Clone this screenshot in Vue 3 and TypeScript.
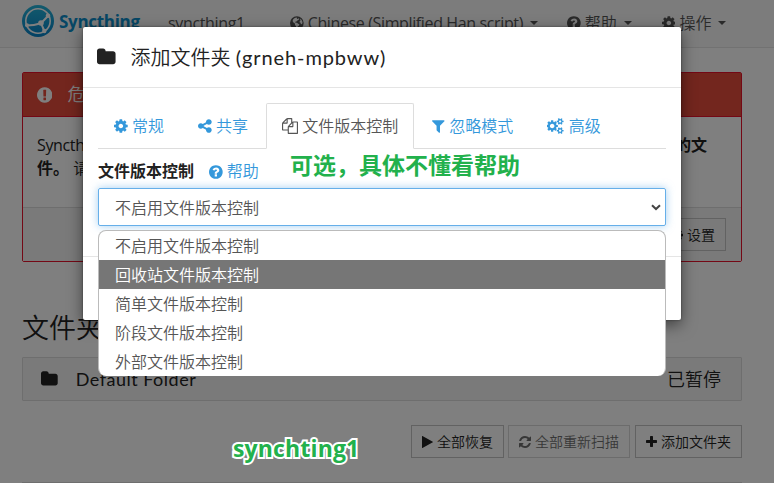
<script setup lang="ts">
import { defineComponent, h } from 'vue'

interface Glyph {
  box: string
  d: string
}

const glyphs: Record<string, Glyph> = {
  cog: {
    box: '128 0 1536 1792',
    d: 'M1152 896q0-106-75-181t-181-75-181 75-75 181 75 181 181 75 181-75 75-181zm512-109v222q0 12-8 23t-20 13l-185 28q-19 54-39 91 35 50 107 138 10 12 10 25t-9 23q-27 37-99 108t-94 71q-12 0-26-9l-138-108q-44 23-91 38-16 136-29 186-7 28-36 28h-222q-14 0-24.5-8.5t-11.5-21.5l-28-184q-49-16-90-37l-141 107q-10 9-25 9-14 0-25-11-126-114-165-168-7-10-7-23 0-12 8-23 15-21 51-66.5t54-70.5q-27-50-41-99l-183-27q-13-2-21-12.5t-8-23.5v-222q0-12 8-23t19-13l186-28q14-46 39-92-40-57-107-138-10-12-10-24 0-10 9-23 26-36 98.5-107.5t94.5-71.5q13 0 26 10l138 107q44-23 91-38 16-136 29-186 7-28 36-28h222q14 0 24.5 8.5t11.5 21.5l28 184q49 16 90 37l142-107q9-9 24-9 13 0 25 10 129 119 165 170 7 8 7 22 0 12-8 23-15 21-51 66.5t-54 70.5q26 50 41 98l183 28q13 2 21 12.5t8 23.5z',
  },
  share: {
    box: '128 0 1536 1792',
    d: 'M1344 1024q133 0 226.5 93.5t93.5 226.5-93.5 226.5-226.5 93.5-226.5-93.5-93.5-226.5q0-12 2-34l-360-180q-92 86-218 86-133 0-226.5-93.5t-93.5-226.5 93.5-226.5 226.5-93.5q126 0 218 86l360-180q-2-22-2-34 0-133 93.5-226.5t226.5-93.5 226.5 93.5 93.5 226.5-93.5 226.5-226.5 93.5q-126 0-218-86l-360 180q2 22 2 34t-2 34l360 180q92-86 218-86z',
  },
  files: {
    box: '0 0 1792 1792',
    d: 'M1696 384q40 0 68 28t28 68v1216q0 40-28 68t-68 28h-960q-40 0-68-28t-28-68v-288h-544q-40 0-68-28t-28-68v-672q0-40 20-88t48-76l408-408q28-28 76-48t88-20h416q40 0 68 28t28 68v328q68-40 128-40h416zm-544 213l-299 299h299v-299zm-640-384l-299 299h299v-299zm196 647l316-316v-416h-384v416q0 40-28 68t-68 28h-416v640h512v-256q0-40 20-88t48-76zm956 804v-1152h-384v416q0 40-28 68t-68 28h-416v640h896z',
  },
  filter: {
    box: '192 0 1408 1792',
    d: 'M1595 295q17 41-14 70l-493 493v742q0 42-39 59-13 5-25 5-27 0-45-19l-256-256q-19-19-19-45v-486l-493-493q-31-29-14-70 17-39 59-39h1280q42 0 59 39z',
  },
  cogs: {
    box: '0 0 1920 1792',
    d: 'M832 896q0-106-75-181t-181-75-181 75-75 181 75 181 181 75 181-75 75-181zm768 512q0-52-38-90t-90-38-90 38-38 90q0 53 37.5 90.5t90.5 37.5 90.5-37.5 37.5-90.5zm0-1024q0-52-38-90t-90-38-90 38-38 90q0 53 37.5 90.5t90.5 37.5 90.5-37.5 37.5-90.5zm-384 421v185q0 10-7 19.5t-16 10.5l-155 24q-11 35-32 76 34 48 90 115 7 11 7 20 0 12-7 19-23 30-82.5 89.5t-78.5 59.5q-11 0-21-7l-115-90q-37 19-77 31-11 108-23 155-7 24-30 24h-186q-11 0-20-7.5t-10-17.5l-23-153q-34-10-75-31l-118 89q-7 7-20 7-11 0-21-8-144-133-144-160 0-9 7-19 10-14 41-53t47-61q-23-44-35-82l-152-24q-10-1-17-9.5t-7-19.5v-185q0-10 7-19.5t16-10.5l155-24q11-35 32-76-34-48-90-115-7-11-7-20 0-12 7-20 22-30 82-89t79-59q11 0 21 7l115 90q34-18 77-32 11-108 23-154 7-24 30-24h186q11 0 20 7.5t10 17.5l23 153q34 10 75 31l118-89q8-7 20-7 11 0 21 8 144 133 144 160 0 9-7 19-12 16-42 54t-45 60q23 48 34 82l152 23q10 2 17 10.5t7 19.5zm640 533v140q0 16-149 31-12 27-30 52 51 113 51 138 0 4-4 7-122 71-124 71-8 0-46-47t-52-68q-20 2-30 2t-30-2q-14 21-52 68t-46 47q-2 0-124-71-4-3-4-7 0-25 51-138-18-25-30-52-149-15-149-31v-140q0-16 149-31 13-29 30-52-51-113-51-138 0-4 4-7 4-2 35-20t59-34 30-16q8 0 46 46.5t52 67.5q20-2 30-2t30 2q51-71 92-112l6-2q4 0 124 70 4 3 4 7 0 25-51 138 17 23 30 52 149 15 149 31zm0-1024v140q0 16-149 31-12 27-30 52 51 113 51 138 0 4-4 7-122 71-124 71-8 0-46-47t-52-68q-20 2-30 2t-30-2q-14 21-52 68t-46 47q-2 0-124-71-4-3-4-7 0-25 51-138-18-25-30-52-149-15-149-31v-140q0-16 149-31 13-29 30-52-51-113-51-138 0-4 4-7 4-2 35-20t59-34 30-16q8 0 46 46.5t52 67.5q20-2 30-2t30 2q51-71 92-112l6-2q4 0 124 70 4 3 4 7 0 25-51 138 17 23 30 52 149 15 149 31z',
  },
  question: {
    box: '128 0 1536 1792',
    d: 'M1024 1376v-192q0-14-9-23t-23-9h-192q-14 0-23 9t-9 23v192q0 14 9 23t23 9h192q14 0 23-9t9-23zm256-672q0-88-55.5-163t-138.5-116-170-41q-243 0-371 213-15 24 8 42l132 100q7 6 19 6 16 0 25-12 53-68 86-92 34-24 86-24 48 0 85.5 26t37.5 59q0 38-20 61t-68 45q-63 28-115.5 86.5t-52.5 125.5v36q0 14 9 23t23 9h192q14 0 23-9t9-23q0-19 21.5-49.5t54.5-49.5q32-18 49-28.5t46-35 44.5-48 28-60.5 12.5-81zm384 192q0 209-103 385.5t-279.5 279.5-385.5 103-385.5-103-279.5-279.5-103-385.5 103-385.5 279.5-279.5 385.5-103 385.5 103 279.5 279.5 103 385.5z',
  },
  exclamation: {
    box: '128 0 1536 1792',
    d: 'M896 128q209 0 385.5 103t279.5 279.5 103 385.5-103 385.5-279.5 279.5-385.5 103-385.5-103-279.5-279.5-103-385.5 103-385.5 279.5-279.5 385.5-103zm128 1247v-190q0-14-9-23.5t-22-9.5h-192q-13 0-23 10t-10 23v190q0 13 10 23t23 10h192q13 0 22-9.5t9-23.5zm-2-344l18-621q0-12-10-18-10-8-24-8h-220q-14 0-24 8-10 6-10 18l17 621q0 10 10 17.5t24 7.5h185q14 0 23.5-7.5t10.5-17.5z',
  },
  folder: {
    box: '64 0 1664 1792',
    d: 'M1728 608v704q0 92-66 158t-158 66h-1216q-92 0-158-66t-66-158v-960q0-92 66-158t158-66h320q92 0 158 66t66 158v32h672q92 0 158 66t66 158z',
  },
  plus: {
    box: '192 0 1408 1792',
    d: 'M1600 736v192q0 40-28 68t-68 28h-416v416q0 40-28 68t-68 28h-192q-40 0-68-28t-28-68v-416h-416q-40 0-68-28t-28-68v-192q0-40 28-68t68-28h416v-416q0-40 28-68t68-28h192q40 0 68 28t28 68v416h416q40 0 68 28t28 68z',
  },
  play: {
    box: '192 0 1408 1792',
    d: 'M1576 927l-1328 738q-23 13-39.5 3t-16.5-36v-1472q0-26 16.5-36t39.5 3l1328 738q23 13 23 31t-23 31z',
  },
  refresh: {
    box: '128 0 1536 1792',
    d: 'M1639 1056q0 5-1 7-64 268-268 434.5t-478 166.5q-146 0-282.5-55t-243.5-157l-129 129q-19 19-45 19t-45-19-19-45v-448q0-26 19-45t45-19h448q26 0 45 19t19 45-19 45l-137 137q71 66 161 102t187 36q134 0 250-65t186-179q11-17 53-117 8-23 30-23h192q13 0 22.5 9.5t9.5 22.5zm25-800v448q0 26-19 45t-45 19h-448q-26 0-45-19t-19-45 19-45l138-138q-148-137-349-137-134 0-250 65t-186 179q-11 17-53 117-8 23-30 23h-199q-13 0-22.5-9.5t-9.5-22.5v-7q65-268 270-434.5t480-166.5q146 0 284 55.5t245 156.5l130-129q19-19 45-19t45 19 19 45z',
  },
  globe: {
    box: '128 0 1536 1792',
    d: 'M896 128a768 768 0 1 0 0 1536a768 768 0 1 0 0-1536zM850 270l90 60-60 110 120 20 60-90 90 40-40 110-150 90-110 130-130 10 20 110 170 20 130 110 130 40-30 150-130 80-60 160-70 70-80-30 10-210-120-120-10-170-170-110-90-190 70-190 170-140zM1230 400l150 110 120 200 30 190-80 150-110-40-30-130-110-60 30-160 100-60-60-90z',
  },
}

const Icon = defineComponent({
  props: { name: { type: String, required: true } },
  setup(props) {
    return () => {
      const g = glyphs[props.name]
      return h('svg', { class: 'fa', viewBox: g.box, 'aria-hidden': 'true' }, [
        h('path', { d: g.d, 'fill-rule': props.name === 'globe' ? 'evenodd' : 'nonzero' }),
      ])
    }
  },
})

const tabs = [
  { icon: 'cog', label: '常规' },
  { icon: 'share', label: '共享' },
  { icon: 'files', label: '文件版本控制', active: true },
  { icon: 'filter', label: '忽略模式' },
  { icon: 'cogs', label: '高级' },
]

const options = ['不启用文件版本控制', '回收站文件版本控制', '简单文件版本控制', '阶段文件版本控制', '外部文件版本控制']
const hovered = 1
</script>

<template>
  <div class="screen">
    <nav class="navbar">
      <div class="brand">
        <svg class="logo" viewBox="0 0 32 32">
          <defs>
            <linearGradient id="logo-fill" x1="0" y1="0" x2="0" y2="1">
              <stop offset="0" stop-color="#26b6db" />
              <stop offset="1" stop-color="#0882c8" />
            </linearGradient>
          </defs>
          <circle cx="16" cy="16" r="16" fill="url(#logo-fill)" />
          <g fill="none" stroke="#fff">
            <circle cx="16" cy="16" r="12.2" stroke-width="1.6" />
            <path d="M19 18.2L26.5 10.5M19 18.2Q12 20.5 4.5 20.5M19 18.2L22.5 26.5" stroke-width="2" />
          </g>
          <g fill="#fff">
            <circle cx="19" cy="18" r="2.8" />
            <circle cx="26" cy="10.8" r="2.3" />
            <circle cx="5" cy="20.3" r="2" />
            <circle cx="22.3" cy="26" r="2.2" />
          </g>
        </svg>
        <span class="wordmark">Syncthing</span>
      </div>
      <span class="device">syncthing1</span>
      <ul class="menu">
        <li class="lang"><Icon name="globe" /><span>Chinese (Simplified Han script)</span><b class="caret" /></li>
        <li><Icon name="question" /><span>帮助</span><b class="caret" /></li>
        <li><Icon name="cog" /><span>操作</span><b class="caret" /></li>
      </ul>
    </nav>

    <main class="page">
      <section class="danger">
        <header><Icon name="exclamation" /><span>危险！</span></header>
        <div class="danger-body">
          <p><span>Syncthing</span><strong>的文</strong></p>
          <p><span><strong>件。</strong> 请</span></p>
        </div>
        <footer><button class="btn"><Icon name="cog" />设置</button></footer>
      </section>

      <h3>文件夹</h3>
      <div class="folder-row">
        <Icon name="folder" /><span class="folder-name">Default Folder</span><span class="status">已暂停</span>
      </div>
      <div class="actions">
        <button class="btn resume"><Icon name="play" />全部恢复</button>
        <button class="btn rescan"><Icon name="refresh" />全部重新扫描</button>
        <button class="btn add"><Icon name="plus" />添加文件夹</button>
      </div>
      <hr />
    </main>

    <div class="backdrop" />

    <div class="modal">
      <header class="modal-head">
        <Icon name="folder" /><h4>添加文件夹 <span>(grneh-mpbww)</span></h4>
      </header>
      <div class="modal-body">
        <ul class="tabs">
          <li v-for="t in tabs" :key="t.label" :class="{ active: t.active }"><Icon :name="t.icon" />{{ t.label }}</li>
        </ul>
        <div class="label-row">
          <label>文件版本控制</label>
          <a><Icon name="question" />帮助</a>
        </div>
        <div class="select">
          <span>不启用文件版本控制</span>
          <svg class="chevron" viewBox="0 0 10 7"><path d="M1 1.2L5 5L9 1.2" /></svg>
          <ul class="dropdown">
            <li v-for="(o, i) in options" :key="o" :class="{ hover: i === hovered }">{{ o }}</li>
          </ul>
        </div>
      </div>
      <footer class="modal-foot" />
    </div>

    <div class="note note-help">可选，具体不懂看帮助</div>
    <div class="note note-device">synchting1</div>
  </div>
</template>

<style>
body {
  margin: 0;
  overflow: hidden;
}
</style>

<style scoped>
.screen {
  position: relative;
  width: 774px;
  height: 483px;
  overflow: hidden;
  background: #fff;
  color: #222;
  font: 350 16px/23px "Noto Sans", "Noto Sans CJK SC", sans-serif;
}
.screen * {
  box-sizing: border-box;
}
ul, p, h3, h4 {
  margin: 0;
  padding: 0;
  list-style: none;
  font-weight: 350;
}
strong {
  font-weight: 700;
}
:deep(.fa) {
  height: 1em;
  flex: none;
  fill: currentColor;
  display: block;
}
.navbar {
  height: 48px;
  padding-left: 22px;
  display: flex;
  background: #f8f8f8;
  border-bottom: 1px solid #e4e4e4;
  color: #555;
  white-space: nowrap;
}
.brand {
  width: 146px;
  display: flex;
  padding-top: 5px;
}
.logo {
  width: 32px;
  height: 32px;
}
.wordmark {
  margin: 5px 0 0 5px;
  font: 700 17px/24px "Open Sans", sans-serif;
  letter-spacing: -0.3px;
  color: #0d8ecb;
}
.device {
  width: 122px;
  padding-top: 12px;
  font-family: "Open Sans", sans-serif;
  font-weight: 400;
  letter-spacing: -0.35px;
}
.menu {
  display: flex;
  padding-top: 11px;
}
.menu li {
  height: 24px;
  display: flex;
  align-items: center;
  gap: 4px;
  margin-right: 30px;
}
.menu .lang {
  font-family: "Open Sans", sans-serif;
  font-weight: 400;
  letter-spacing: -0.37px;
  margin-right: 29px;
}
.caret {
  margin-left: 3px;
  border: 4px solid transparent;
  border-top-color: #555;
  border-bottom: 0;
}
.page {
  padding: 24px 32px 0 22px;
}
.danger {
  height: 190px;
  border: 1px solid #e8102a;
  border-radius: 2px;
  display: flex;
  flex-direction: column;
}
.danger header {
  height: 44px;
  background: #e74c3c;
  border-bottom: 1px solid #e8102a;
  color: #fff;
  display: flex;
  align-items: center;
  gap: 15px;
  padding-left: 14px;
  font-size: 18px;
}
.danger-body {
  flex: 1;
  padding: 17px 34px 0 14px;
}
.danger-body p {
  display: flex;
  justify-content: space-between;
}
.danger-body p:first-child > span {
  font-family: "Open Sans", sans-serif;
  font-weight: 400;
  letter-spacing: -0.35px;
}
.danger footer {
  height: 54px;
  background: #f5f5f5;
  border-top: 1px solid #ddd;
  display: flex;
  justify-content: flex-end;
  padding: 10px 15px;
}
.btn {
  height: 33px;
  padding: 0 10px;
  display: flex;
  align-items: center;
  justify-content: center;
  gap: 4px;
  border: 1px solid #c4c4c4;
  background: transparent;
  color: #222;
  font: 350 14px/20px "Noto Sans", "Noto Sans CJK SC", sans-serif;
  white-space: nowrap;
}
h3 {
  margin-top: 48px;
  font-size: 27px;
  line-height: 36px;
}
.folder-row {
  height: 44px;
  margin-top: 11px;
  padding: 0 20px 0 18px;
  display: flex;
  align-items: center;
  background: #f5f5f5;
  border: 1px solid #ddd;
  border-radius: 1px;
  font-size: 18px;
}
.folder-name {
  margin-left: 18px;
  font-family: Lato, sans-serif;
  font-weight: 400;
  letter-spacing: 0.5px;
}
.status {
  margin-left: auto;
}
.actions {
  margin-top: 24px;
  display: flex;
  justify-content: flex-end;
}
.resume {
  width: 93px;
  margin-right: 4px;
}
.rescan {
  width: 122px;
  margin-right: 5px;
  opacity: 0.65;
}
.add {
  width: 107px;
}
hr {
  margin: 24px 0 0;
  border: 0;
  border-top: 1px solid #ddd;
}
.backdrop {
  position: absolute;
  inset: 0;
  background: rgba(0, 0, 0, 0.5);
}
.modal {
  position: absolute;
  left: 83px;
  top: 27px;
  width: 598px;
  height: 293px;
  background: #fff;
  border-radius: 2px;
  box-shadow: 0 5px 15px rgba(0, 0, 0, 0.5), 0 0 2px rgba(0, 0, 0, 0.5);
  display: flex;
  flex-direction: column;
}
.modal-head {
  height: 61px;
  border-bottom: 1px solid #e5e5e5;
  display: flex;
  align-items: center;
  gap: 15px;
  padding-left: 14px;
  font-size: 20px;
}
.modal-head h4 {
  font-size: 20px;
  line-height: 28px;
}
.modal-head h4 span {
  font-family: Lato, sans-serif;
  font-weight: 400;
  letter-spacing: 0.9px;
}
.modal-body {
  flex: 1;
  padding: 15px 15px 0;
}
.tabs {
  height: 46px;
  display: flex;
  align-items: stretch;
  border-bottom: 1px solid #ddd;
  color: #3498db;
}
.tabs li {
  height: 46px;
  display: flex;
  align-items: center;
  gap: 4.3px;
  padding: 0 15px;
  margin-right: 2px;
  border: 1px solid transparent;
  white-space: nowrap;
}
.tabs .active {
  background: #fff;
  border-color: #ddd;
  border-bottom-color: #fff;
  border-radius: 2px 2px 0 0;
  color: #555;
}
.label-row {
  height: 39px;
  padding-top: 11px;
  display: flex;
  gap: 15px;
}
.label-row label {
  font-weight: 700;
}
.label-row a {
  height: 23px;
  display: flex;
  align-items: center;
  gap: 4px;
  color: #3498db;
}
.select {
  position: relative;
  height: 38px;
  padding: 0 4px 0 16px;
  display: flex;
  align-items: center;
  justify-content: space-between;
  border: 1px solid #66afe9;
  border-radius: 2px;
  box-shadow: 0 0 8px rgba(102, 175, 233, 0.6);
  color: #555;
}
.select > span {
  padding-top: 2px;
}
.chevron {
  width: 10px;
  height: 7px;
  fill: none;
  stroke: #444;
  stroke-width: 2;
}
.dropdown {
  position: absolute;
  left: -1px;
  top: 41px;
  width: 568px;
  height: 146px;
  border: 1px solid #bbb;
  border-bottom: 0;
  border-radius: 8px;
  background: #fff;
  overflow: hidden;
}
.dropdown li {
  height: 29px;
  padding-left: 16px;
  line-height: 31px;
}
.dropdown .hover {
  background: #767676;
  color: #fff;
}
.modal-foot {
  height: 64px;
  border-top: 1px solid #e5e5e5;
}
.note {
  position: absolute;
  color: #22b14c;
  font-weight: 700;
  white-space: nowrap;
}
.note-help {
  left: 290px;
  top: 149px;
  font-size: 23px;
  line-height: 32px;
}
.note-device {
  left: 233px;
  top: 432px;
  font-family: "Open Sans", sans-serif;
  font-size: 23px;
  line-height: 32px;
  letter-spacing: 0.15px;
  -webkit-text-stroke: 4px #fff;
  paint-order: stroke fill;
}
</style>
